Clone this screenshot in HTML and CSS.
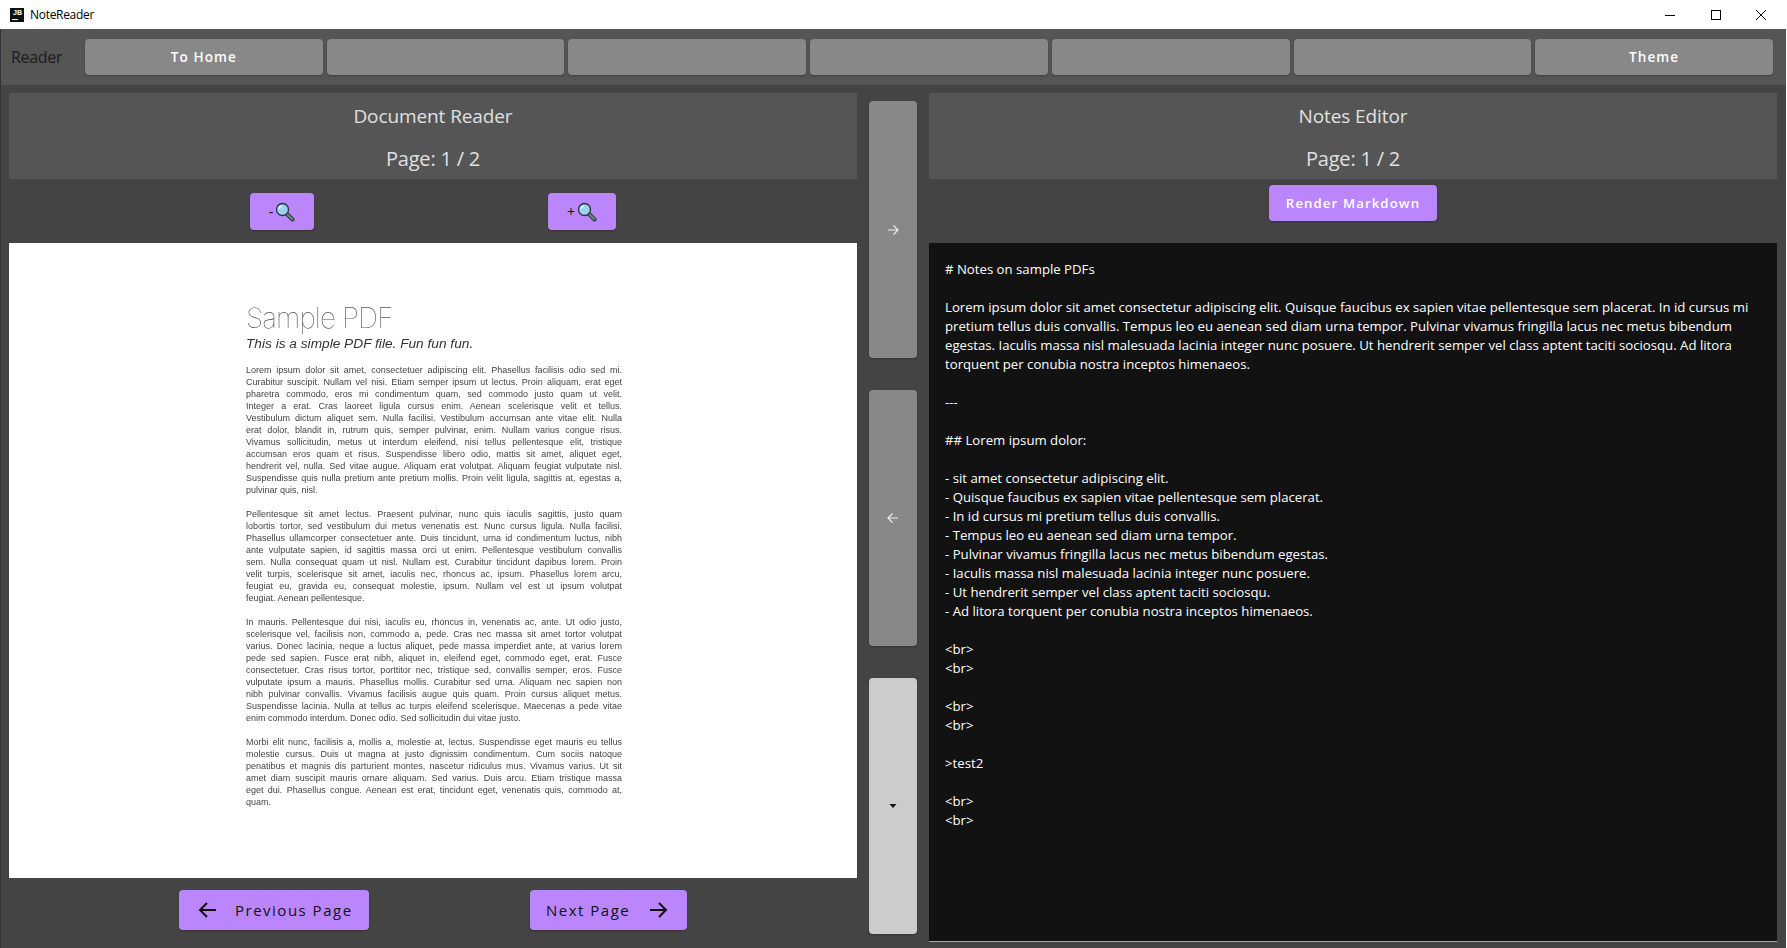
FILE: index.html
```html
<!DOCTYPE html>
<html lang="en">
<head>
<meta charset="utf-8">
<title>NoteReader</title>
<link rel="stylesheet" href="styles.css">
</head>
<body>
<div class="window">
  <header class="titlebar">
    <div class="app-id">
      <span class="jb-logo"><span class="jb-text">JB</span><span class="jb-dash"></span></span>
      <span class="app-name">NoteReader</span>
    </div>
    <div class="win-controls">
      <span class="win-btn"><svg width="10" height="10" viewBox="0 0 10 10"><path d="M0 5.5H10" stroke="#000" stroke-width="1" fill="none"/></svg></span>
      <span class="win-btn"><svg width="10" height="10" viewBox="0 0 10 10"><rect x=".5" y=".5" width="9" height="9" stroke="#000" stroke-width="1" fill="none"/></svg></span>
      <span class="win-btn"><svg width="10" height="10" viewBox="0 0 10 10"><path d="M0 0L10 10M10 0L0 10" stroke="#000" stroke-width="1" fill="none"/></svg></span>
    </div>
  </header>

  <nav class="toolbar">
    <span class="toolbar-label">Reader</span>
    <div class="toolbar-buttons">
      <button class="tool-btn">To Home</button>
      <button class="tool-btn"></button>
      <button class="tool-btn"></button>
      <button class="tool-btn"></button>
      <button class="tool-btn"></button>
      <button class="tool-btn"></button>
      <button class="tool-btn">Theme</button>
    </div>
  </nav>

  <main class="workspace">
    <section class="panel">
      <div class="panel-head">
        <div class="panel-title">Document Reader</div>
        <div class="panel-page">Page: 1 / 2</div>
      </div>
      <div class="zoom-row">
        <button class="accent-btn zoom-btn"><span class="zoom-sign">-</span><svg class="lens" width="20" height="20" viewBox="0 0 20 20"><path d="M11.5 11.5L17.5 17.5" stroke="#2a3a3a" stroke-width="4" stroke-linecap="round"/><path d="M12 12L17.3 17.3" stroke="#6f8585" stroke-width="2" stroke-linecap="round"/><circle cx="7.5" cy="7.5" r="6" fill="#9ed0f0" stroke="#26363c" stroke-width="1.3"/><path d="M4 7a3.5 3.5 0 0 1 3-3" stroke="#e4f5ff" stroke-width="1.3" fill="none"/></svg></button>
        <button class="accent-btn zoom-btn zoom-plus"><span class="zoom-sign">+</span><svg class="lens" width="20" height="20" viewBox="0 0 20 20"><path d="M11.5 11.5L17.5 17.5" stroke="#2a3a3a" stroke-width="4" stroke-linecap="round"/><path d="M12 12L17.3 17.3" stroke="#6f8585" stroke-width="2" stroke-linecap="round"/><circle cx="7.5" cy="7.5" r="6" fill="#9ed0f0" stroke="#26363c" stroke-width="1.3"/><path d="M4 7a3.5 3.5 0 0 1 3-3" stroke="#e4f5ff" stroke-width="1.3" fill="none"/></svg></button>
      </div>
      <div class="pdf-view">
        <article class="pdf-page">
          <h1 class="pdf-title">Sample PDF</h1>
          <p class="pdf-sub">This is a simple PDF file. Fun fun fun.</p>
          <p class="pdf-para">
            <span class="ln">Lorem ipsum dolor sit amet, consectetuer adipiscing elit. Phasellus facilisis odio sed mi.</span>
            <span class="ln">Curabitur suscipit. Nullam vel nisi. Etiam semper ipsum ut lectus. Proin aliquam, erat eget</span>
            <span class="ln">pharetra commodo, eros mi condimentum quam, sed commodo justo quam ut velit.</span>
            <span class="ln">Integer a erat. Cras laoreet ligula cursus enim. Aenean scelerisque velit et tellus.</span>
            <span class="ln">Vestibulum dictum aliquet sem. Nulla facilisi. Vestibulum accumsan ante vitae elit. Nulla</span>
            <span class="ln">erat dolor, blandit in, rutrum quis, semper pulvinar, enim. Nullam varius congue risus.</span>
            <span class="ln">Vivamus sollicitudin, metus ut interdum eleifend, nisi tellus pellentesque elit, tristique</span>
            <span class="ln">accumsan eros quam et risus. Suspendisse libero odio, mattis sit amet, aliquet eget,</span>
            <span class="ln">hendrerit vel, nulla. Sed vitae augue. Aliquam erat volutpat. Aliquam feugiat vulputate nisl.</span>
            <span class="ln">Suspendisse quis nulla pretium ante pretium mollis. Proin velit ligula, sagittis at, egestas a,</span>
            <span class="ln end">pulvinar quis, nisl.</span>
          </p>
          <p class="pdf-para">
            <span class="ln">Pellentesque sit amet lectus. Praesent pulvinar, nunc quis iaculis sagittis, justo quam</span>
            <span class="ln">lobortis tortor, sed vestibulum dui metus venenatis est. Nunc cursus ligula. Nulla facilisi.</span>
            <span class="ln">Phasellus ullamcorper consectetuer ante. Duis tincidunt, urna id condimentum luctus, nibh</span>
            <span class="ln">ante vulputate sapien, id sagittis massa orci ut enim. Pellentesque vestibulum convallis</span>
            <span class="ln">sem. Nulla consequat quam ut nisl. Nullam est. Curabitur tincidunt dapibus lorem. Proin</span>
            <span class="ln">velit turpis, scelerisque sit amet, iaculis nec, rhoncus ac, ipsum. Phasellus lorem arcu,</span>
            <span class="ln">feugiat eu, gravida eu, consequat molestie, ipsum. Nullam vel est ut ipsum volutpat</span>
            <span class="ln end">feugiat. Aenean pellentesque.</span>
          </p>
          <p class="pdf-para">
            <span class="ln">In mauris. Pellentesque dui nisi, iaculis eu, rhoncus in, venenatis ac, ante. Ut odio justo,</span>
            <span class="ln">scelerisque vel, facilisis non, commodo a, pede. Cras nec massa sit amet tortor volutpat</span>
            <span class="ln">varius. Donec lacinia, neque a luctus aliquet, pede massa imperdiet ante, at varius lorem</span>
            <span class="ln">pede sed sapien. Fusce erat nibh, aliquet in, eleifend eget, commodo eget, erat. Fusce</span>
            <span class="ln">consectetuer. Cras risus tortor, porttitor nec, tristique sed, convallis semper, eros. Fusce</span>
            <span class="ln">vulputate ipsum a mauris. Phasellus mollis. Curabitur sed urna. Aliquam nec sapien non</span>
            <span class="ln">nibh pulvinar convallis. Vivamus facilisis augue quis quam. Proin cursus aliquet metus.</span>
            <span class="ln">Suspendisse lacinia. Nulla at tellus ac turpis eleifend scelerisque. Maecenas a pede vitae</span>
            <span class="ln end">enim commodo interdum. Donec odio. Sed sollicitudin dui vitae justo.</span>
          </p>
          <p class="pdf-para">
            <span class="ln">Morbi elit nunc, facilisis a, mollis a, molestie at, lectus. Suspendisse eget mauris eu tellus</span>
            <span class="ln">molestie cursus. Duis ut magna at justo dignissim condimentum. Cum sociis natoque</span>
            <span class="ln">penatibus et magnis dis parturient montes, nascetur ridiculus mus. Vivamus varius. Ut sit</span>
            <span class="ln">amet diam suscipit mauris ornare aliquam. Sed varius. Duis arcu. Etiam tristique massa</span>
            <span class="ln">eget dui. Phasellus congue. Aenean est erat, tincidunt eget, venenatis quis, commodo at,</span>
            <span class="ln end">quam.</span>
          </p>
        </article>
      </div>
      <div class="pager">
        <button class="accent-btn page-btn page-prev"><svg width="24" height="24" viewBox="0 0 24 24"><path d="M20 12H4M11 5L4 12L11 19" stroke="#111" stroke-width="2" fill="none"/></svg><span>Previous Page</span></button>
        <button class="accent-btn page-btn page-next"><span>Next Page</span><svg width="24" height="24" viewBox="0 0 24 24"><path d="M4 12H20M13 5L20 12L13 19" stroke="#111" stroke-width="2" fill="none"/></svg></button>
      </div>
    </section>

    <aside class="side-rail">
      <button class="rail-btn"><svg width="12" height="12" viewBox="0 0 12 12"><path d="M1 6H11M6.500 1.500L11 6L6.500 10.500" stroke="#eee" stroke-width="1.200" fill="none"/></svg></button>
      <button class="rail-btn"><svg width="12" height="12" viewBox="0 0 12 12"><path d="M11 6H1M5.500 1.500L1 6L5.500 10.500" stroke="#eee" stroke-width="1.200" fill="none"/></svg></button>
      <button class="rail-btn rail-active"><svg width="8" height="4" viewBox="0 0 8 4"><path d="M.5 0H7.500L4 4Z" fill="#111"/></svg></button>
    </aside>

    <section class="panel">
      <div class="panel-head">
        <div class="panel-title">Notes Editor</div>
        <div class="panel-page">Page: 1 / 2</div>
      </div>
      <div class="render-row">
        <button class="accent-btn render-btn">Render Markdown</button>
      </div>
      <div class="editor"># Notes on sample PDFs

Lorem ipsum dolor sit amet consectetur adipiscing elit. Quisque faucibus ex sapien vitae pellentesque sem placerat. In id cursus mi
pretium tellus duis convallis. Tempus leo eu aenean sed diam urna tempor. Pulvinar vivamus fringilla lacus nec metus bibendum
egestas. Iaculis massa nisl malesuada lacinia integer nunc posuere. Ut hendrerit semper vel class aptent taciti sociosqu. Ad litora
torquent per conubia nostra inceptos himenaeos.

---

## Lorem ipsum dolor:

- sit amet consectetur adipiscing elit.
- Quisque faucibus ex sapien vitae pellentesque sem placerat.
- In id cursus mi pretium tellus duis convallis.
- Tempus leo eu aenean sed diam urna tempor.
- Pulvinar vivamus fringilla lacus nec metus bibendum egestas.
- Iaculis massa nisl malesuada lacinia integer nunc posuere.
- Ut hendrerit semper vel class aptent taciti sociosqu.
- Ad litora torquent per conubia nostra inceptos himenaeos.

&lt;br&gt;
&lt;br&gt;

&lt;br&gt;
&lt;br&gt;

&gt;test2

&lt;br&gt;
&lt;br&gt;</div>
    </section>
  </main>
</div>
</body>
</html>
```

FILE: styles.css
```css
* { box-sizing: border-box; }
html, body { margin: 0; padding: 0; height: 100%; background: #fff; overflow: hidden; }
body { font-family: "Open Sans", "Noto Sans", sans-serif; }
button { font-family: inherit; border: 0; padding: 0; margin: 0; cursor: pointer; }

.window { width: 1787px; height: 948px; display: flex; flex-direction: column; padding-right: 1px; }

.titlebar { height: 29px; display: flex; justify-content: space-between; align-items: center; background: #fff; padding-left: 10px; flex: none; }
.app-id { display: flex; align-items: center; gap: 6px; }
.jb-logo { width: 14px; height: 14px; background: #111; display: flex; flex-direction: column; padding: 1px 2px; }
.jb-text { color: #fff; font: 700 7px/8px "Liberation Sans", sans-serif; text-align: right; }
.jb-dash { width: 6px; height: 1px; background: #fff; margin-top: 2px; }
.app-name { font-size: 12px; color: #000; letter-spacing: -0.3px; }
.win-controls { display: flex; padding-right: 2px; }
.win-btn { width: 45.500px; height: 29px; display: flex; align-items: center; justify-content: center; }

.toolbar { height: 56px; background: #555; border-left: 1px solid #333; display: flex; align-items: center; padding: 0 13px 0 10px; flex: none; }
.toolbar-label { width: 74px; flex: none; color: #1c1c1c; font-size: 16px; letter-spacing: -0.3px; }
.toolbar-buttons { flex: 1; display: grid; grid-template-columns: repeat(7, 1fr); gap: 4px; }
.tool-btn { height: 36px; background: #888; border-radius: 4px; color: #fff; font-size: 13.500px; font-weight: 600; letter-spacing: 1.100px; box-shadow: 0 1px 2px rgba(0,0,0,.25); }

.workspace { flex: 1; min-height: 0; background: #444; border-left: 1px solid #333; padding: 8px 8px 0; display: grid; grid-template-columns: 848px 72px 848px; }

.panel { display: flex; flex-direction: column; min-width: 0; height: 855px; }
.panel-head { height: 86px; background: #555; color: #e0e0e0; text-align: center; flex: none; }
.panel-title { line-height: 26px; padding-top: 10px; font-size: 19px; letter-spacing: -0.1px; }
.panel-page { line-height: 26px; padding-top: 17px; font-size: 20px; letter-spacing: -0.2px; }

.accent-btn { background: #bb86fc; border-radius: 4px; box-shadow: 0 1px 2px rgba(0,0,0,.25); }

.zoom-row { height: 64px; display: flex; justify-content: center; align-items: flex-start; gap: 234px; padding-top: 14px; flex: none; }
.zoom-btn { width: 64px; height: 37px; display: flex; align-items: center; justify-content: center; gap: 2px; color: #111; font-size: 14px; }
.zoom-plus { width: 68px; }
.zoom-sign { line-height: 20px; }
.lens { flex: none; }

.pdf-view { height: 635px; background: #fff; flex: none; display: flex; justify-content: center; }
.pdf-page { width: 376px; margin-left: 2px; padding-top: 58px; filter: blur(0.3px); font-family: "Liberation Sans", Arial, sans-serif; }
.pdf-title { margin: 0; font: 100 28px/34px Inter, "Liberation Sans", sans-serif; color: #555; letter-spacing: -0.9px; }
.pdf-sub { margin: 0; font: italic 400 13.700px/18px "Liberation Sans", sans-serif; color: #333; }
.pdf-para { margin: 0 0 12px; font-size: 9px; line-height: 12px; color: #444; }
.pdf-sub + .pdf-para { margin-top: 11px; }
.ln { display: block; height: 12px; text-align: justify; text-align-last: justify; }
.end { text-align-last: left; }

.pager { display: flex; justify-content: center; align-items: flex-start; gap: 161px; padding-top: 12px; flex: none; }
.page-btn { height: 40px; display: flex; align-items: center; color: #111; font-size: 15px; letter-spacing: 1.500px; }
.page-btn span { display: block; }
.page-prev { width: 190px; padding-left: 17px; gap: 15px; }
.page-next { width: 157px; padding-left: 16px; gap: 16px; }

.side-rail { display: grid; grid-template-rows: 257px 256px 256px; row-gap: 32px; height: 841px; padding: 8px 12px 0; }
.rail-btn { background: #888; border-radius: 4px; display: flex; align-items: center; justify-content: center; box-shadow: 0 1px 2px rgba(0,0,0,.25); }
.rail-active { background: #ccc; }

.render-row { height: 64px; display: flex; justify-content: center; align-items: flex-start; padding-top: 6px; flex: none; }
.render-btn { width: 168px; height: 36px; color: #fff; font-size: 13.200px; font-weight: 600; letter-spacing: 1.100px; }

.editor { height: 699px; background: #121212; border-bottom: 1px solid #aaa; color: #fff; padding: 17px 16px 0; font-size: 13.190px; line-height: 19px; white-space: pre; overflow: hidden; flex: none; }
```
